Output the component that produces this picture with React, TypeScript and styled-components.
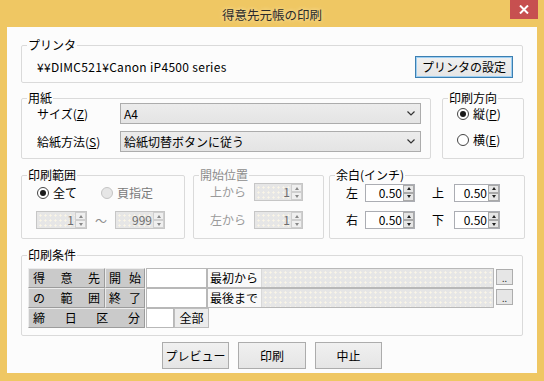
import React from 'react';
import styled, { createGlobalStyle, css } from 'styled-components';

const FONT = `"Noto Sans CJK JP", "Noto Sans", sans-serif`;

const Global = createGlobalStyle`
  html, body { margin: 0; padding: 0; background: #efc763; }
  body { font-family: ${FONT}; font-size: 12px; color: #000; }
  * { box-sizing: border-box; }
`;

const dotted = css`
  background-color: #e6e6e6;
  background-image: radial-gradient(circle, #fbf6e6 0.9px, transparent 1.2px);
  background-size: 5px 5px;
  background-position: 1px 1px;
`;

const Window = styled.div`
  width: 544px;
  height: 381px;
  background: #efc763;
  display: flex;
  flex-direction: column;
  padding: 0 7px 8px 7px;
`;

const TitleBar = styled.div`
  position: relative;
  height: 27px;
  margin: 0 -7px;
  display: flex;
  align-items: center;
  justify-content: center;
  padding-top: 3px;
`;

const Title = styled.div`
  font-size: 12.5px;
  line-height: 14px;
  color: #2a2a2a;
  text-shadow: 0 0 4px rgba(255, 240, 200, 0.9);
`;

const CloseButton = styled.div`
  position: absolute;
  top: 0;
  right: 6px;
  width: 28px;
  height: 19px;
  background: #c75050;
  display: flex;
  align-items: center;
  justify-content: center;
`;

const Client = styled.div`
  flex: 1;
  background: #fcfcfc;
  display: flex;
  flex-direction: column;
  padding: 11px 14px 0 14px;
`;

const Row = styled.div<{ $mt?: number; $gap?: number }>`
  display: flex;
  margin-top: ${p => p.$mt ?? 0}px;
  gap: ${p => p.$gap ?? 0}px;
`;

const Group = styled.fieldset<{ $w?: number; $h: number; $ml?: number }>`
  margin: 0 0 0 ${p => p.$ml ?? 0}px;
  padding: 0;
  min-width: 0;
  border: 1px solid #dadada;
  border-radius: 2px;
  height: ${p => p.$h}px;
  width: ${p => (p.$w ? `${p.$w}px` : '100%')};
  flex: none;
`;

const Legend = styled.legend<{ $disabled?: boolean }>`
  padding: 0 1px;
  margin-left: 5px;
  font-size: 12px;
  line-height: 14px;
  color: ${p => (p.$disabled ? '#8d8d8d' : '#000')};
`;

const Text = styled.span<{ $color?: string; $w?: number; $ml?: number; $ls?: number }>`
  font-size: 12px;
  line-height: 14px;
  white-space: nowrap;
  color: ${p => p.$color ?? '#000'};
  margin-left: ${p => p.$ml ?? 0}px;
  letter-spacing: ${p => p.$ls ?? 0}px;
  ${p => (p.$w ? `width: ${p.$w}px; flex: none;` : '')}
`;

const PrinterRow = styled.div`
  height: 30px;
  display: flex;
  align-items: center;
  justify-content: space-between;
  padding: 0 9px 0 15px;
`;

const PushButton = styled.div<{ $w: number; $h: number; $focus?: boolean }>`
  width: ${p => p.$w}px;
  height: ${p => p.$h}px;
  flex: none;
  border: 1px solid ${p => (p.$focus ? '#3c7fb1' : '#acacac')};
  box-shadow: ${p => (p.$focus ? 'inset 0 0 0 1px #9dcff3' : 'none')};
  background: linear-gradient(#f0f0f0, #e5e5e5);
  display: flex;
  align-items: center;
  justify-content: center;
  font-size: 12px;
  line-height: 14px;
`;

const PaperBody = styled.div`
  margin-top: -2px;
  padding: 0 9px 0 15px;
  display: flex;
  flex-direction: column;
  gap: 7px;
`;

const FieldRow = styled.div`
  display: flex;
  align-items: center;
`;

const Combo = styled.div`
  flex: 1;
  height: 21px;
  border: 1px solid #acacac;
  background: linear-gradient(#ececec, #e4e4e4);
  display: flex;
  align-items: center;
  justify-content: space-between;
  padding: 0 5px 0 3px;
`;

const Mn = styled.u`
  text-underline-offset: 1px;
`;

const RadioColumn = styled.div`
  margin-top: 1px;
  padding: 0 0 0 14px;
  display: flex;
  flex-direction: column;
  gap: 10px;
`;

const RadioItem = styled.div`
  display: flex;
  align-items: center;
  gap: 4px;
  height: 16px;
`;

const RadioCircle = styled.span<{ $checked?: boolean; $disabled?: boolean }>`
  width: 12px;
  height: 12px;
  flex: none;
  border-radius: 50%;
  border: 1px solid ${p => (p.$disabled ? '#c4c4c4' : '#444')};
  background: ${p => (p.$disabled ? '#e6e6e6' : '#fff')};
  display: flex;
  align-items: center;
  justify-content: center;
  &::after {
    content: '';
    width: 6px;
    height: 6px;
    border-radius: 50%;
    background: #1a1a1a;
    display: ${p => (p.$checked ? 'block' : 'none')};
  }
`;

const RangeBody = styled.div`
  padding-left: 15px;
  display: flex;
  flex-direction: column;
`;

const InlineRow = styled.div<{ $mt?: number; $gap?: number; $h?: number; $ml?: number }>`
  display: flex;
  align-items: center;
  margin-top: ${p => p.$mt ?? 0}px;
  margin-left: ${p => p.$ml ?? 0}px;
  gap: ${p => p.$gap ?? 0}px;
  height: ${p => p.$h ?? 18}px;
`;

const SpinBox = styled.div<{ $w: number; $disabled?: boolean }>`
  width: ${p => p.$w}px;
  height: 18px;
  flex: none;
  display: flex;
  border: 1px solid ${p => (p.$disabled ? '#c6c6c6' : '#abadb3')};
  ${p => (p.$disabled ? dotted : 'background: #fff;')}
`;

const SpinValue = styled.div<{ $disabled?: boolean }>`
  flex: 1;
  text-align: right;
  padding-right: 1px;
  font-size: 12px;
  line-height: 16px;
  color: ${p => (p.$disabled ? '#6d6d6d' : '#000')};
`;

const SpinButtons = styled.div`
  width: 11px;
  flex: none;
  display: flex;
  flex-direction: column;
`;

const SpinHalf = styled.div<{ $down?: boolean; $disabled?: boolean }>`
  flex: 1;
  border: 1px solid ${p => (p.$disabled ? '#cfcfcf' : '#a9a9a9')};
  background: ${p => (p.$disabled ? '#efefef' : '#e6e6e6')};
  display: flex;
  align-items: center;
  justify-content: center;
  &::after {
    content: '';
    border-left: 2.5px solid transparent;
    border-right: 2.5px solid transparent;
    ${p =>
      p.$down
        ? `border-top: 3px solid ${p.$disabled ? '#888' : '#222'};`
        : `border-bottom: 3px solid ${p.$disabled ? '#888' : '#222'};`}
  }
`;

const Tilde = styled.span`
  width: 12px;
  text-align: center;
  color: #8d8d8d;
  font-size: 12px;
`;

const StartBody = styled.div`
  padding-left: 16px;
  display: flex;
  flex-direction: column;
`;

const MarginBody = styled.div`
  padding-left: 16px;
  display: flex;
  flex-direction: column;
`;

const Table = styled.div`
  margin: 6px 0 0 6px;
  display: grid;
  grid-template-columns: 77px 40px 62px 288px 18px;
  grid-template-rows: 20px 20px 20px;
`;

const LabelCell = styled.div<{ $span?: number; $pad?: number }>`
  grid-column: span ${p => p.$span ?? 1};
  background: #cacaca;
  border: 1px solid;
  border-color: #ececec #9c9c9c #9c9c9c #ececec;
  display: flex;
  align-items: center;
  justify-content: space-between;
  padding: 0 ${p => p.$pad ?? 4}px;
  font-size: 12px;
  line-height: 14px;
`;

const InputCell = styled.div<{ $w?: number }>`
  background: #fff;
  border: 1px solid #b8b8b8;
  margin-left: 1px;
  ${p => (p.$w ? `width: ${p.$w}px; flex: none;` : '')}
`;

const RangeField = styled.div`
  display: flex;
  border: 1px solid #b8b8b8;
  margin-right: 1px;
`;

const RangeText = styled.div`
  background: #f9f9f9;
  border-right: 1px solid #d8d8d8;
  padding: 0 3px 0 2px;
  font-size: 12px;
  line-height: 18px;
  white-space: nowrap;
`;

const RangeDots = styled.div`
  flex: 1;
  ${dotted}
`;

const DotButton = styled.div`
  margin: 1px 0 3px 1px;
  border: 1px solid #adadad;
  background: #e6e6e6;
  display: flex;
  align-items: flex-end;
  justify-content: center;
  font-size: 9px;
  line-height: 9px;
  color: #333;
  padding-bottom: 1px;
`;

const CutoffCell = styled.div`
  grid-column: span 2;
  display: flex;
`;

const SmallButton = styled.div`
  width: 35px;
  flex: none;
  border: 1px solid #bdbdbd;
  background: #ececec;
  font-size: 12px;
  line-height: 18px;
  text-align: center;
`;

const ButtonBar = styled.div`
  margin-top: 6px;
  display: flex;
  justify-content: center;
  gap: 9px;
`;

const Chevron = () => (
  <svg width="8" height="5" viewBox="0 0 8 5">
    <polyline points="0.5,0.5 4,4 7.5,0.5" fill="none" stroke="#333" strokeWidth="1.2" />
  </svg>
);

const Spin: React.FC<{ w: number; value: string; disabled?: boolean }> = ({ w, value, disabled }) => (
  <SpinBox $w={w} $disabled={disabled}>
    <SpinValue $disabled={disabled}>{value}</SpinValue>
    <SpinButtons>
      <SpinHalf $disabled={disabled} />
      <SpinHalf $down $disabled={disabled} />
    </SpinButtons>
  </SpinBox>
);

const Spread: React.FC<{ text: string }> = ({ text }) => (
  <>
    {text.split('').map((c, i) => (
      <span key={i}>{c}</span>
    ))}
  </>
);

export default function App() {
  return (
    <>
      <Global />
      <Window>
        <TitleBar>
          <Title>得意先元帳の印刷</Title>
          <CloseButton>
            <svg width="10" height="9" viewBox="0 0 10 9">
              <path d="M1 0.5 L9 8.5 M9 0.5 L1 8.5" stroke="#fff" strokeWidth="2" />
            </svg>
          </CloseButton>
        </TitleBar>
        <Client>
          <Group $h={45}>
            <Legend>プリンタ</Legend>
            <PrinterRow>
              <Text $ls={0.3}>¥¥DIMC521¥Canon iP4500 series</Text>
              <PushButton $w={98} $h={22} $focus>
                プリンタの設定
              </PushButton>
            </PrinterRow>
          </Group>

          <Row $mt={8} $gap={11}>
            <Group $w={410} $h={68}>
              <Legend>用紙</Legend>
              <PaperBody>
                <FieldRow>
                  <Text $w={83}>
                    サイズ(<Mn>Z</Mn>)
                  </Text>
                  <Combo>
                    <Text>A4</Text>
                    <Chevron />
                  </Combo>
                </FieldRow>
                <FieldRow>
                  <Text $w={83}>
                    給紙方法(<Mn>S</Mn>)
                  </Text>
                  <Combo>
                    <Text>給紙切替ボタンに従う</Text>
                    <Chevron />
                  </Combo>
                </FieldRow>
              </PaperBody>
            </Group>
            <Group $w={82} $h={68}>
              <Legend>印刷方向</Legend>
              <RadioColumn>
                <RadioItem>
                  <RadioCircle $checked />
                  <Text>
                    縦(<Mn>P</Mn>)
                  </Text>
                </RadioItem>
                <RadioItem>
                  <RadioCircle />
                  <Text>
                    横(<Mn>E</Mn>)
                  </Text>
                </RadioItem>
              </RadioColumn>
            </Group>
          </Row>

          <Row $mt={9}>
            <Group $w={164} $h={71}>
              <Legend>印刷範囲</Legend>
              <RangeBody>
                <InlineRow $mt={3} $h={16} $gap={24}>
                  <RadioItem>
                    <RadioCircle $checked />
                    <Text>全て</Text>
                  </RadioItem>
                  <RadioItem>
                    <RadioCircle $disabled />
                    <Text $color="#7a7a7a">頁指定</Text>
                  </RadioItem>
                </InlineRow>
                <InlineRow $mt={10} $gap={8} $ml={-1}>
                  <Spin w={51} value="1" disabled />
                  <Tilde>〜</Tilde>
                  <Spin w={50} value="999" disabled />
                </InlineRow>
              </RangeBody>
            </Group>
            <Group $w={131} $h={71} $ml={8}>
              <Legend $disabled>開始位置</Legend>
              <StartBody>
                <InlineRow $mt={1}>
                  <Text $w={44} $color="#9a9a9a">上から</Text>
                  <Spin w={49} value="1" disabled />
                </InlineRow>
                <InlineRow $mt={10}>
                  <Text $w={44} $color="#9a9a9a">左から</Text>
                  <Spin w={49} value="1" disabled />
                </InlineRow>
              </StartBody>
            </Group>
            <Group $w={196} $h={71} $ml={5}>
              <Legend>余白(インチ)</Legend>
              <MarginBody>
                <InlineRow $mt={1} $h={19}>
                  <Text $w={19}>左</Text>
                  <Spin w={50} value="0.50" />
                  <Text $w={22} $ml={17}>上</Text>
                  <Spin w={46} value="0.50" />
                </InlineRow>
                <InlineRow $mt={9}>
                  <Text $w={19}>右</Text>
                  <Spin w={50} value="0.50" />
                  <Text $w={22} $ml={17}>下</Text>
                  <Spin w={46} value="0.50" />
                </InlineRow>
              </MarginBody>
            </Group>
          </Row>

          <Row $mt={9}>
            <Group $h={88}>
              <Legend>印刷条件</Legend>
              <Table>
                <LabelCell>
                  <Spread text="得意先" />
                </LabelCell>
                <LabelCell $pad={3}>
                  <Spread text="開始" />
                </LabelCell>
                <InputCell />
                <RangeField>
                  <RangeText>最初から</RangeText>
                  <RangeDots />
                </RangeField>
                <DotButton>..</DotButton>

                <LabelCell>
                  <Spread text="の範囲" />
                </LabelCell>
                <LabelCell $pad={3}>
                  <Spread text="終了" />
                </LabelCell>
                <InputCell />
                <RangeField>
                  <RangeText>最後まで</RangeText>
                  <RangeDots />
                </RangeField>
                <DotButton>..</DotButton>

                <LabelCell $span={2}>
                  <Spread text="締日区分" />
                </LabelCell>
                <CutoffCell>
                  <InputCell $w={28} />
                  <SmallButton>全部</SmallButton>
                </CutoffCell>
              </Table>
            </Group>
          </Row>

          <ButtonBar>
            <PushButton $w={67} $h={27}>プレビュー</PushButton>
            <PushButton $w={68} $h={27}>印刷</PushButton>
            <PushButton $w={67} $h={27}>中止</PushButton>
          </ButtonBar>
        </Client>
      </Window>
    </>
  );
}
